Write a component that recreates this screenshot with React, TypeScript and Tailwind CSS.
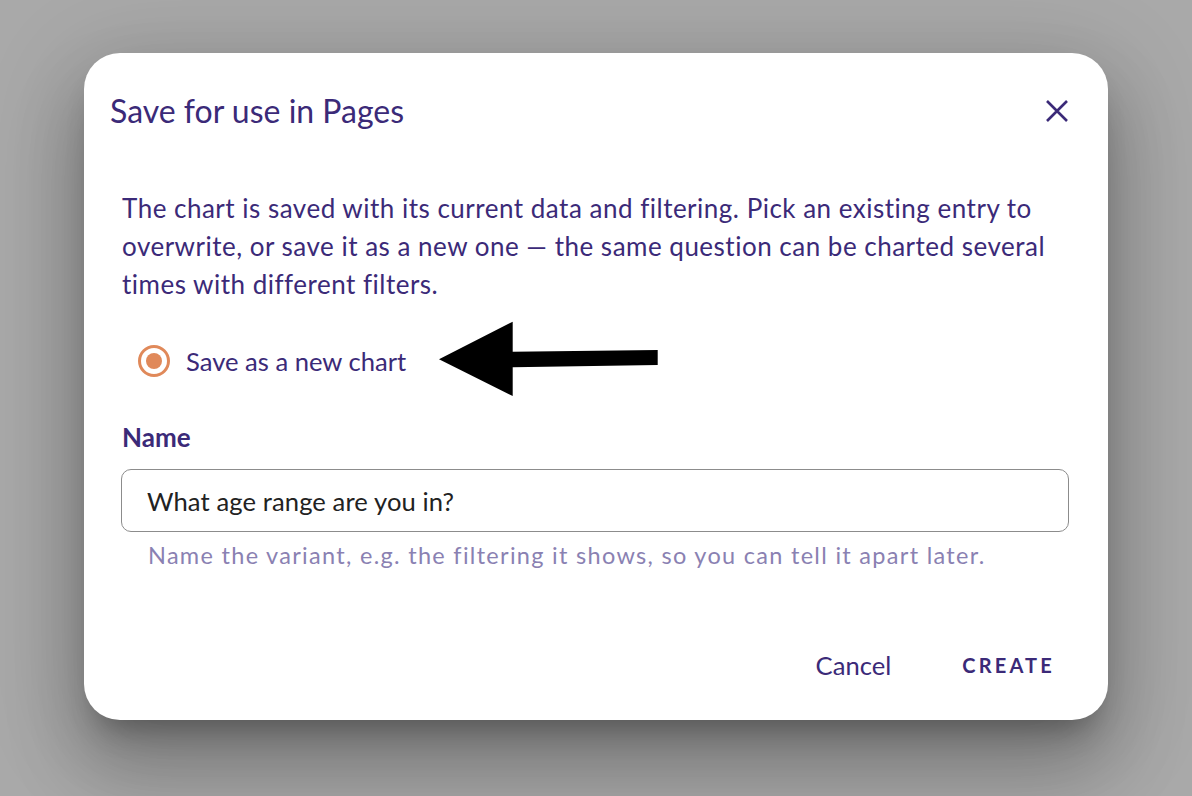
import React from 'react';

const Arrow: React.FC = () => (
  <svg
    className="absolute left-[355px] top-[268px] pointer-events-none"
    width="220"
    height="76"
    viewBox="0 0 220 76"
  >
    <polygon
      points="0,38.3 73.7,0.7 73.7,30.7 218.7,29 218.7,44 73.7,46.3 73.7,75"
      fill="#000"
    />
  </svg>
);

export default function App() {
  const [name, setName] = React.useState('What age range are you in?');

  return (
    <div
      className="w-full h-[796px] bg-[#a9a9a9] pt-[53px] overflow-hidden"
      style={{ fontFamily: 'Lato, "Noto Sans", sans-serif' }}
    >
      <div className="relative mx-auto w-[1024px] h-[667px] bg-white rounded-[36px] flex flex-col shadow-[0_22px_30px_-14px_rgba(0,0,0,0.3),0_48px_76px_6px_rgba(0,0,0,0.2),0_18px_92px_16px_rgba(0,0,0,0.14)]">
        {/* Title */}
        <div className="flex items-center justify-between pl-[26px] pr-[36px] pt-[38px]">
          <h2 className="text-[32px] leading-[40px] text-[#3b2a78] font-normal">Save for use in Pages</h2>
          <button className="w-[30px] h-[30px] flex items-center justify-center text-[#3b2a78]">
            <svg width="24" height="24" viewBox="0 0 24 24" fill="none" stroke="currentColor" strokeWidth="2.6" strokeLinecap="butt">
              <path d="M2 2 L22 22 M22 2 L2 22" />
            </svg>
          </button>
        </div>

        {/* Content */}
        <div className="px-[38px]">
          <p className="mt-[58px] text-[26px] leading-[38px] tracking-[0.5px] text-[#3b2a78]">
            The chart is saved with its current data and filtering. Pick an existing entry to overwrite, or save it as a new one — the same question can be charted several times with different filters.
          </p>

          <label className="mt-[38px] h-[40px] flex items-center gap-[16px] pl-[16px] text-[25.6px] text-[#3b2a78]">
            <span className="w-[32px] h-[32px] rounded-full border-[3px] border-[#e0895a] flex items-center justify-center">
              <span className="w-[16px] h-[16px] rounded-full bg-[#e0895a]" />
            </span>
            Save as a new chart
          </label>

          <div className="mt-[41px] text-[26px] leading-[30px] font-bold text-[#3b2a78]">Name</div>

          <input
            value={name}
            onChange={(e) => setName(e.target.value)}
            className="mt-[17px] w-[948px] h-[63px] -ml-[1px] rounded-[10px] border border-[#8c8c8c] px-[25px] text-[25.6px] tracking-[0.1px] text-[#222222] outline-none"
          />

          <div className="mt-[8px] ml-[26px] text-[23.5px] leading-[30px] tracking-[1.3px] text-[#8a81b2]">
            Name the variant, e.g. the filtering it shows, so you can tell it apart later.
          </div>
        </div>

        {/* Footer */}
        <div className="mt-auto pb-[40px] pr-[56px] flex items-center justify-end gap-[71px]">
          <button className="text-[25.6px] leading-[30px] text-[#3b2a78]">Cancel</button>
          <button className="text-[20px] leading-[30px] font-bold tracking-[3.2px] -mr-[3px] text-[#3b2a78]">CREATE</button>
        </div>

        <Arrow />
      </div>
    </div>
  );
}
